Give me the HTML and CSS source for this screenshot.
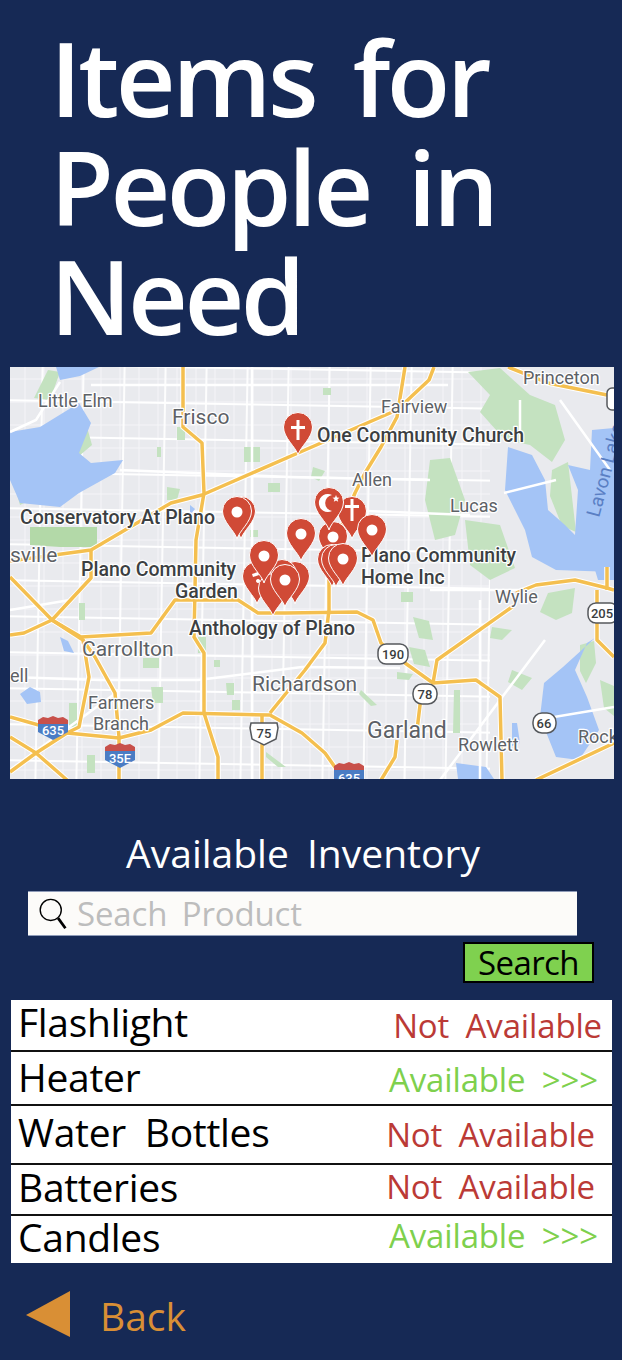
FILE: index.html
```html
<!DOCTYPE html>
<html lang="en">
<head>
<meta charset="utf-8">
<title>Items for People in Need</title>
<link rel="stylesheet" href="styles.css">
</head>
<body>
<main class="page">
  <h1 class="title">Items for<br>People in<br>Need</h1>
  <svg class="map" viewBox="10 367 604 412" role="img" aria-label="Map of Plano area">
    <defs>
      <pattern id="grid" width="41" height="36" patternUnits="userSpaceOnUse" patternTransform="rotate(1)">
        <path d="M0 4H41M8 0V36" class="minor"/>
      </pattern>
      <pattern id="fine" width="19" height="23" patternUnits="userSpaceOnUse">
        <path d="M0 11H19M6 0V23" class="fine"/>
      </pattern>
      <symbol id="pin" viewBox="-16 -17 32 46" overflow="visible">
        <path class="pin-body" d="M0 27C-2 19-14.500 10-14.500-1A14.500 14.500 0 1 1 14.500-1C14.500 10 2 19 0 27Z"/>
      </symbol>
      <g id="roads">
        <path d="M183 367V427L202 443 204 493 196 540 194 637 204 653 204 713 218 757V780"/>
        <path d="M10 561L91 550 171 503 202 495 298 453 397 410 429 380 434 367"/>
        <path d="M91 550V578L52 620M405 367L397 417 381 447 365 473 355 493 340 530 329 580V610L325 643 305 670 270 713"/>
        <path d="M10 635L24 633 52 620 81 637 151 633 175 600 238 600 258 613 286 613 357 612 373 620 381 643 405 663 433 683 476 680 500 697 502 780"/>
        <path d="M10 717L67 733 119 738 151 730 183 713 270 715 302 733 325 753 337 770"/>
        <path d="M10 577L52 620 83 640 89 677 79 727 67 733 36 753 10 772M10 737L36 753 67 780"/>
        <path d="M83 640L95 657 115 693 119 737V780M262 715V780M417 730L421 697M397 740L395 757 381 780M536 780L614 743M508 367L548 383 607 395"/>
        <path d="M516 593L536 585 575 580 607 588 614 590M597 590V640L614 657M433 683L437 660 512 607M607 567V590"/>
      </g>
    </defs>
    <rect x="10" y="367" width="604" height="412" class="land"/>
    <rect x="10" y="367" width="480" height="412" fill="url(#fine)"/>
    <rect x="10" y="367" width="480" height="412" fill="url(#grid)"/>

    <g class="park">
      <path d="M468 372L500 368 530 395 555 405 565 440 552 462 530 445 505 440 480 412 490 395Z"/>
      <path d="M552 470L568 462 576 532 562 526 550 496Z"/>
      <path d="M430 460L450 458 465 500 455 535 435 540 425 500Z"/>
      <path d="M465 520L500 525 515 568 490 580 470 565Z"/>
      <path d="M548 593L575 588 572 613 556 620 540 612Z"/>
      <path d="M48 370L60 372 50 400 34 398ZM60 450L87 427 92 445 72 462ZM15 487L30 480 34 498 20 505Z"/>
      <path class="park-dark" d="M30 527H97V547H60L30 545Z"/>
      <path d="M244 447h16v15h-16zM157 447h4v10h-4zM177 427h8v13h-8zM323 388h8v7h-8zM313 467l12 4-6 10-8-4zM268 483h12v9h-12zM167 487l13 2-3 11h-10zM250 530h8v7h-8z"/>
      <path d="M401 592h12v10h-12zM413 617l16 4 4 19-14-2zM409 647l16 3 5 17-16-3zM397 672l16 2-4 6-12-1zM361 690l16 15-6 1-12-12zM454 690h6v43h-7zM492 627l20 3-10 10-12-2zM512 670l20 8-10 12-14-8zM79 603h6v17h-6zM143 658h16v10h-16zM226 683h8v12h-7zM232 700h8v10h-8zM151 687h12v16h-10zM69 703h8v24h-8zM266 752l20 15h-8l-12-10zM87 755h8v18h-8zM214 660h6v7h-6zM198 637h8v16h-8z"/>
      <path d="M580 645l14-4 2 22-10 20-6-12zM600 680l14 6v30l-10-8z"/>
    </g>

    <g class="water">
      <path d="M10 432L40 427 79 403 91 423 79 453 91 463 123 460 115 473 79 493 60 507 20 503 10 480Z"/>
      <path d="M56 367H99L80 376 60 380Z"/>
      <path d="M508 447L532 455 545 480 548 510 565 525 575 535 578 490 568 465 590 470 592 430 614 428V572L556 570 532 557 525 530 505 490Z"/>
      <path d="M595 638L563 667 544 683 540 717 556 757 579 760 599 730 587 697 575 670 587 643Z"/>
      <path d="M20 694l10-7 10 5 1 10-14 2zM456 763l30 4 8 12h-36zM512 723l5 0 3 20-8 3zM60 637l8 4 6 12-10-2zM595 570h19v10h-16zM190 505l5 4-5 6z"/>
    </g>

    <g class="white-road">
      <path d="M91 385H448M10 432L36 420 60 382M10 610L70 600M10 677L100 680 198 680 302 667 400 668M536 720L614 707M504 493L556 480M120 470L290 477 430 480M252 367V780M340 510L470 515M10 770L120 690M440 780L545 640M430 590L520 590M480 600V780M520 400V440M560 400L610 470"/>
    </g>

    <use href="#roads" class="road-casing"/>
    <use href="#roads" class="road"/>

    <g class="label">
      <text x="38" y="407" class="l-md">Little Elm</text>
      <text x="172" y="424" class="l-lg">Frisco</text>
      <text x="381" y="413" class="l-md">Fairview</text>
      <text x="523" y="384" class="l-md">Princeton</text>
      <text x="352" y="486" class="l-md">Allen</text>
      <text x="450" y="512" class="l-md">Lucas</text>
      <text x="10" y="562" class="l-lg">sville</text>
      <text x="88" y="709" class="l-md">Farmers</text>
      <text x="93" y="730" class="l-md">Branch</text>
      <text x="82" y="656" class="l-lg">Carrollton</text>
      <text x="252" y="691" class="l-lg">Richardson</text>
      <text x="367" y="738" class="l-xl">Garland</text>
      <text x="458" y="751" class="l-md">Rowlett</text>
      <text x="495" y="603" class="l-md">Wylie</text>
      <text x="578" y="743" class="l-md">Rock</text>
      <text x="10" y="682" class="l-md">ell</text>
      <g class="l-dark">
        <text x="317" y="442">One Community Church</text>
        <text x="20" y="524">Conservatory At Plano</text>
        <text x="81" y="576">Plano Community</text>
        <text x="175" y="598">Garden</text>
        <text x="189" y="635">Anthology of Plano</text>
        <text x="361" y="562">Plano Community</text>
        <text x="361" y="584">Home Inc</text>
      </g>
      <text x="599" y="518" class="l-water" transform="rotate(-75 599 518)">Lavon Lake</text>
    </g>

    <g class="shield">
      <rect x="378" y="644" width="30" height="20" rx="8"/><text x="393" y="659">190</text>
      <rect x="413" y="684" width="24" height="20" rx="9"/><text x="425" y="699">78</text>
      <rect x="533" y="713" width="23" height="20" rx="9"/><text x="544" y="728">66</text>
      <rect x="588" y="603" width="30" height="20" rx="8"/><text x="602" y="618">205</text>
      <path d="M251 723h26l1 5-2 11-12 6-12-6-2-11Z"/><text x="264" y="738">75</text>
      <rect x="607" y="388" width="12" height="22" rx="5"/>
    </g>
    <g class="interstate">
      <path class="i-blue" d="M38 724h30v8l-15 8-15-8Z"/><path class="i-red" d="M38 720l5-3 5 1 5-2 5 2 5-1 5 3v4h-30Z"/><text x="53" y="735">635</text>
      <path class="i-blue" d="M105 751h30v9l-15 8-15-8Z"/><path class="i-red" d="M105 747l5-3 5 1 5-2 5 2 5-1 5 3v4h-30Z"/><text x="120" y="763">35E</text>
      <path class="i-blue" d="M334 770h30v10h-30Z"/><path class="i-red" d="M334 766l5-3 5 1 5-2 5 2 5-1 5 3v4h-30Z"/><text x="349" y="783">635</text>
    </g>

    <g class="pins">
      <use href="#pin" x="282" y="411" width="32" height="46"/>
      <path class="pin-mark" d="M296.500 420h3v6h5.500v3h-5.500v11h-3v-11h-5.500v-3h5.500Z"/>

      <use href="#pin" x="225" y="495" width="32" height="46"/>
      <use href="#pin" x="221" y="495" width="32" height="46"/>
      <circle class="pin-mark" cx="237" cy="512" r="5.500"/>

      <use href="#pin" x="336" y="495" width="32" height="46"/>
      <path class="pin-mark" d="M350.500 499h3v6h5.500v3h-5.500v13h-3v-13h-5.500v-3h5.500Z"/>

      <use href="#pin" x="317" y="520" width="32" height="46"/>
      <circle class="pin-mark" cx="333" cy="537" r="5.500"/>

      <use href="#pin" x="356" y="513" width="32" height="46"/>
      <circle class="pin-mark" cx="372" cy="530" r="5.500"/>

      <use href="#pin" x="313" y="486" width="32" height="46"/>
      <path class="pin-mark" d="M332 495a9 9 0 1 0 0 16a8.100 8.100 0 0 1 0-16Z"/>
      <path class="pin-mark" d="M336 495l1 2.500 2.500.2-2 1.600.7 2.500-2.200-1.400-2.200 1.400.7-2.500-2-1.600 2.500-.2Z"/>

      <use href="#pin" x="285" y="517" width="32" height="46"/>
      <circle class="pin-mark" cx="301" cy="534" r="5.500"/>

      <use href="#pin" x="316" y="543" width="32" height="46"/>
      <use href="#pin" x="320" y="543" width="32" height="46"/>
      <use href="#pin" x="327" y="542" width="32" height="46"/>
      <circle class="pin-mark" cx="343" cy="559" r="5.500"/>

      <use href="#pin" x="279" y="560" width="32" height="46"/>
      <use href="#pin" x="266" y="558" width="32" height="46"/>
      <use href="#pin" x="241" y="560" width="32" height="46"/>
      <path class="pin-mark" d="M252 574l6-2 1 3-6 2ZM258 579a2 2 0 1 0 .1 0Z"/>
      <use href="#pin" x="257" y="572" width="32" height="46"/>
      <use href="#pin" x="248" y="539" width="32" height="46"/>
      <circle class="pin-mark" cx="264" cy="556" r="5.500"/>
      <use href="#pin" x="269" y="563" width="32" height="46"/>
      <circle class="pin-mark" cx="285" cy="580" r="5.500"/>
    </g>
  </svg>

  <h2 class="heading">Available Inventory</h2>

  <div class="search">
    <svg class="search-icon" viewBox="0 0 32 36" aria-hidden="true">
      <circle cx="13" cy="13" r="11.500"/>
      <path d="M21 22L29 33" class="handle"/>
    </svg>
    <span class="placeholder">Seach Product</span>
  </div>
  <div class="actions"><button class="button" type="button">Search</button></div>

  <ul class="list">
    <li class="row row-1"><span class="name">Flashlight</span><span class="status no">Not Available</span></li>
    <li class="row row-2"><span class="name">Heater</span><span class="status yes">Available &gt;&gt;&gt;</span></li>
    <li class="row row-3"><span class="name">Water Bottles</span><span class="status no">Not Available</span></li>
    <li class="row row-4"><span class="name">Batteries</span><span class="status no">Not Available</span></li>
    <li class="row row-5"><span class="name">Candles</span><span class="status yes">Available &gt;&gt;&gt;</span></li>
  </ul>

  <a class="back" href="#">
    <svg class="back-arrow" viewBox="0 0 44 46" aria-hidden="true"><path d="M0 24L44 0V46Z"/></svg>
    <span class="back-label">Back</span>
  </a>
</main>
</body>
</html>
```

FILE: styles.css
```css
* { box-sizing: border-box; }
html, body { margin: 0; padding: 0; }
body {
  background: #162955;
  font-family: "Open Sans", "Noto Sans", sans-serif;
  width: 622px;
  height: 1360px;
  overflow: hidden;
}
.page { display: flex; flex-direction: column; }
.title {
  margin: 0;
  padding: 22px 0 0 50px;
  height: 367px;
  color: #fff;
  font-size: 104px;
  font-weight: 600;
  line-height: 109px;
  letter-spacing: -3.5px;
  word-spacing: 14px;
}
.map { display: block; width: 604px; height: 412px; margin-left: 10px; }
.land { fill: #e9eaee; }
.minor { stroke: #fff; stroke-width: 1.800; fill: none; }
.fine { stroke: #f6f6f8; stroke-width: .9; fill: none; }
.park { fill: #c4e2c0; }
.park-dark { fill: #b3d9a8; }
.water { fill: #a4c4f6; }
.white-road { fill: none; stroke: #fff; stroke-width: 2.500; }
.road-casing { fill: none; stroke: #fff; stroke-width: 5.500; stroke-linejoin: round; }
.road { fill: none; stroke: #f4bf4f; stroke-width: 3.500; stroke-linejoin: round; }
.label text { font-family: Roboto, sans-serif; paint-order: stroke; stroke: #fff; stroke-width: 2.500px; stroke-linejoin: round; fill: #5d6166; }
.l-md { font-size: 18px; }
.l-lg { font-size: 21px; }
.l-xl { font-size: 23px; }
.label .l-dark text { font-size: 19.500px; font-weight: 500; fill: #3c3f42; }
.label .l-water { font-size: 19px; fill: #5a7fc4; stroke: none; }
.shield rect, .shield > path { fill: #fff; stroke: #55585c; stroke-width: 1.500; }
.shield text { font: 500 13px Roboto, sans-serif; fill: #3a3d40; text-anchor: middle; }
.i-blue { fill: #4a7cc4; }
.i-red { fill: #c8504a; }
.interstate text { font: 500 13px Roboto, sans-serif; fill: #fff; text-anchor: middle; }
.pin-body { fill: #d04a36; stroke: #fff; stroke-width: 1; }
.pin-mark { fill: #fff; }
.heading {
  margin: 46px 0 0;
  height: 56px;
  color: #fff;
  font-size: 39px;
  font-weight: 400;
  line-height: 56px;
  text-align: center;
  padding-right: 16px;
  word-spacing: 8px;
}
.search {
  display: flex;
  align-items: center;
  gap: 8px;
  width: 549px;
  height: 45px;
  margin: 10px 0 0 28px;
  padding-left: 10px;
  background: #fcfbf9;
  border: 1px solid #8e9bb8;
  border-width: 1px 0;
}
.search-icon { width: 31px; height: 33px; flex: none; margin-top: 2px; }
.search-icon circle { fill: none; stroke: #000; stroke-width: 1.500; }
.handle { fill: none; stroke: #000; stroke-width: 3; }
.placeholder { color: #bdbdbd; font-size: 33px; line-height: 42px; letter-spacing: -.15px; word-spacing: 6px; }
.actions { display: flex; justify-content: flex-end; padding: 6px 28px 0 0; }
.button {
  width: 131px;
  height: 41px;
  padding: 0;
  background: #7fd14f;
  border: 2px solid #000;
  color: #000;
  font: 400 33px/36px "Open Sans", sans-serif;
  letter-spacing: -.6px;
}
.list { list-style: none; margin: 17px 0 0 11px; padding: 0; width: 601px; background: #fff; }
.row {
  display: flex;
  justify-content: space-between;
  align-items: center;
  padding: 0 17px 0 7px;
  border-bottom: 2px solid #111;
}
.row-1 { height: 52px; }
.row-2 { height: 54px; }
.row-3 { height: 59px; }
.row-4 { height: 51px; }
.row-5 { height: 47px; border-bottom: 0; }
.name { color: #000; font-size: 39px; letter-spacing: -.3px; word-spacing: 9px; line-height: 46px; padding-bottom: 6px; }
.row-2 .name { padding-bottom: 3px; }
.status { font-size: 33px; letter-spacing: -.15px; word-spacing: 8px; line-height: 40px; }
.row-1 .status { margin: 2px -7px 0 0; }
.row-2 .status { margin: 4px -3px 0 0; }
.row-4 .status { margin-bottom: 6px; }
.row-5 .status { margin: 0 -3px 8px 0; }
.no { color: #bb3a36; }
.yes { color: #7ed04d; }
.back {
  display: flex;
  align-items: center;
  gap: 30px;
  margin: 24px 0 0 26px;
  color: #d98f35;
  font-size: 39px;
  line-height: 48px;
  text-decoration: none;
}
.back-label { margin-top: 5px; }
.back-arrow { width: 44px; height: 46px; fill: #d98f35; }
```
